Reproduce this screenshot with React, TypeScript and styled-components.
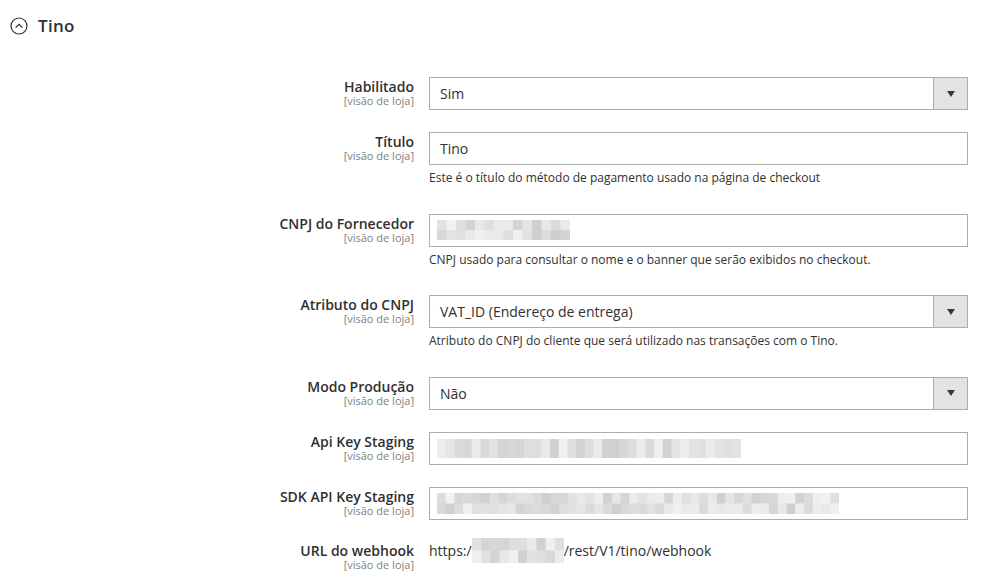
import React from "react";
import styled, { createGlobalStyle } from "styled-components";

const GlobalStyle = createGlobalStyle`
  html, body {
    margin: 0;
    padding: 0;
    background: #fff;
    font-family: "Open Sans", "Noto Sans", sans-serif;
    color: #303030;
  }
`;

// grey shades used for the redacted (pixelated) values
const shade = (seed: number) => {
  const x = Math.sin(seed * 12.9898) * 43758.5453;
  const f = x - Math.floor(x);
  const v = Math.round(206 + f * 36);
  return `rgb(${v},${v},${v})`;
};

const Mosaic = ({ width, height, rows, cols, seed }: { width: number; height: number; rows: number; cols: number; seed: number }) => {
  const cw = width / cols;
  const rh = height / rows;
  const cells = [];
  for (let r = 0; r < rows; r++) {
    for (let c = 0; c < cols; c++) {
      cells.push(
        <rect key={`${r}-${c}`} x={c * cw} y={r * rh} width={cw + 0.5} height={rh + 0.5} fill={shade(seed + r * 97 + c * 7)} />
      );
    }
  }
  return (
    <MosaicSvg width={width} height={height} viewBox={`0 0 ${width} ${height}`}>
      {cells}
    </MosaicSvg>
  );
};

const CollapseIcon = () => (
  <IconSvg width="18" height="18" viewBox="0 0 18 18">
    <circle cx="9" cy="9" r="8" fill="none" stroke="#303030" strokeWidth="1.2" />
    <path d="M5.6 10.6 L9 7.3 L12.4 10.6" fill="none" stroke="#303030" strokeWidth="1.3" />
  </IconSvg>
);

type Field = {
  label: string;
  kind: "select" | "text";
  value?: string;
  mosaic?: { width: number; height: number; rows: number; cols: number; seed: number };
  note?: string;
};

const fields: Field[] = [
  { label: "Habilitado", kind: "select", value: "Sim" },
  { label: "Título", kind: "text", value: "Tino", note: "Este é o título do método de pagamento usado na página de checkout" },
  {
    label: "CNPJ do Fornecedor",
    kind: "text",
    mosaic: { width: 133, height: 20, rows: 2, cols: 14, seed: 3 },
    note: "CNPJ usado para consultar o nome e o banner que serão exibidos no checkout.",
  },
  {
    label: "Atributo do CNPJ",
    kind: "select",
    value: "VAT_ID (Endereço de entrega)",
    note: "Atributo do CNPJ do cliente que será utilizado nas transações com o Tino.",
  },
  { label: "Modo Produção", kind: "select", value: "Não" },
  { label: "Api Key Staging", kind: "text", mosaic: { width: 304, height: 19, rows: 1, cols: 35, seed: 11 } },
  { label: "SDK API Key Staging", kind: "text", mosaic: { width: 402, height: 21, rows: 2, cols: 46, seed: 29 } },
];

export default function App() {
  return (
    <>
      <GlobalStyle />
      <Page>
        <SectionHeader>
          <CollapseIcon />
          <SectionTitle>Tino</SectionTitle>
        </SectionHeader>
        <Form>
          {fields.map((f) => (
            <Row key={f.label}>
              <LabelCell>
                <Label>{f.label}</Label>
                <Scope>[visão de loja]</Scope>
              </LabelCell>
              <ValueCell>
                {f.kind === "select" ? (
                  <SelectBox>
                    <SelectText>{f.value}</SelectText>
                    <SelectButton>
                      <Caret />
                    </SelectButton>
                  </SelectBox>
                ) : (
                  <InputBox>
                    {f.mosaic ? <Mosaic {...f.mosaic} /> : <InputText>{f.value}</InputText>}
                  </InputBox>
                )}
                {f.note && <Note>{f.note}</Note>}
              </ValueCell>
            </Row>
          ))}
          <Row>
            <LabelCell $static>
              <Label>URL do webhook</Label>
              <Scope>[visão de loja]</Scope>
            </LabelCell>
            <ValueCell>
              <StaticValue>
                https:/
                <Mosaic width={92} height={25} rows={2} cols={10} seed={53} />
                /rest/V1/tino/webhook
              </StaticValue>
            </ValueCell>
          </Row>
        </Form>
      </Page>
    </>
  );
}

const Page = styled.div`
  padding: 15px 0 0 10px;
`;

const SectionHeader = styled.div`
  display: flex;
  align-items: center;
  gap: 10px;
  height: 21px;
`;

const IconSvg = styled.svg`
  display: block;
  margin-top: 1px;
`;

const SectionTitle = styled.h3`
  margin: 0;
  font-size: 17px;
  font-weight: 600;
  letter-spacing: 0.3px;
  color: #303030;
`;

const Form = styled.div`
  display: flex;
  flex-direction: column;
  gap: 22px;
  margin-top: 41px;
  margin-left: -10px;
`;

const Row = styled.div`
  display: grid;
  grid-template-columns: 414px 539px;
  column-gap: 15px;
`;

const LabelCell = styled.div<{ $static?: boolean }>`
  display: flex;
  flex-direction: column;
  align-items: flex-end;
  text-align: right;
  padding-top: ${(p) => (p.$static ? "0" : "1px")};
`;

const Label = styled.span`
  font-size: 14px;
  font-weight: 600;
  line-height: 17px;
  color: #303030;
`;

const Scope = styled.span`
  font-size: 11px;
  line-height: 12px;
  color: #808080;
`;

const ValueCell = styled.div`
  display: flex;
  flex-direction: column;
`;

const InputBox = styled.div`
  box-sizing: border-box;
  height: 33px;
  border: 1px solid #adadad;
  background: #fff;
  display: flex;
  align-items: center;
  padding: 0 10px 0 7px;
`;

const InputText = styled.span`
  font-size: 14px;
  color: #303030;
  padding-left: 3px;
`;

const SelectBox = styled.div`
  box-sizing: border-box;
  height: 33px;
  border: 1px solid #adadad;
  background: #fff;
  display: flex;
  align-items: stretch;
`;

const SelectText = styled.span`
  flex: 1;
  display: flex;
  align-items: center;
  padding-left: 10px;
  font-size: 14px;
  color: #303030;
`;

const SelectButton = styled.span`
  width: 33px;
  background: #e3e3e3;
  border-left: 1px solid #adadad;
  display: flex;
  align-items: center;
  justify-content: center;
`;

const Caret = styled.span`
  width: 0;
  height: 0;
  border-left: 4px solid transparent;
  border-right: 4px solid transparent;
  border-top: 6px solid #41362f;
  margin-left: 1px;
`;

const Note = styled.div`
  font-size: 12px;
  line-height: 18px;
  margin: 4px 0 4.5px;
  color: #303030;
`;

const StaticValue = styled.div`
  display: flex;
  align-items: center;
  font-size: 14px;
  line-height: 18px;
  height: 18px;
  color: #303030;
`;

const MosaicSvg = styled.svg`
  display: block;
  flex: none;
`;
